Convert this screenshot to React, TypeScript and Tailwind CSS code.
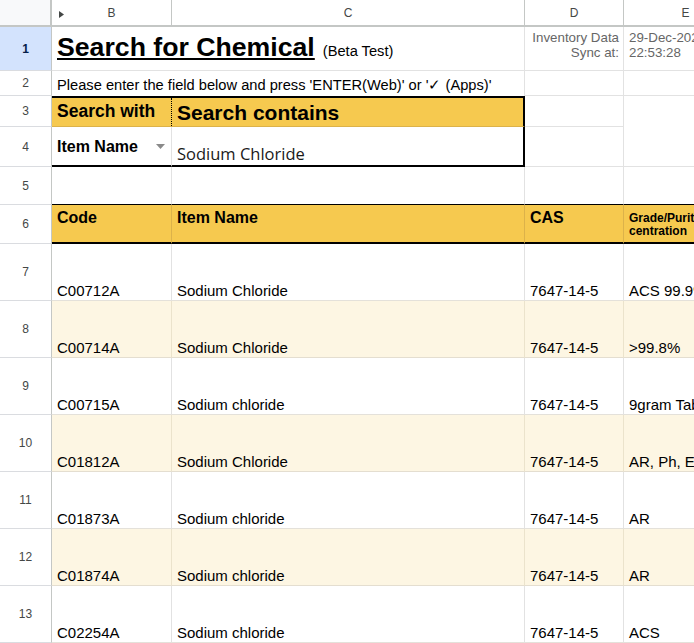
import React from "react";

type Row = { code: string; name: string; cas: string; grade: string };

const rows: Row[] = [
  { code: "C00712A", name: "Sodium Chloride", cas: "7647-14-5", grade: "ACS 99.9%" },
  { code: "C00714A", name: "Sodium Chloride", cas: "7647-14-5", grade: ">99.8%" },
  { code: "C00715A", name: "Sodium chloride", cas: "7647-14-5", grade: "9gram Tablets" },
  { code: "C01812A", name: "Sodium Chloride", cas: "7647-14-5", grade: "AR, Ph, Eur" },
  { code: "C01873A", name: "Sodium chloride", cas: "7647-14-5", grade: "AR" },
  { code: "C01874A", name: "Sodium chloride", cas: "7647-14-5", grade: "AR" },
  { code: "C02254A", name: "Sodium chloride", cas: "7647-14-5", grade: "ACS" },
];

function RowHead({ n, selected = false }: { n: number; selected?: boolean }) {
  return (
    <div
      className={
        selected
          ? "flex items-center justify-center border-r border-b border-r-[#c4c7c5] border-b-[#dadce0] bg-[#d3e3fd] text-[12px] font-bold text-[#041e49]"
          : "flex items-center justify-center border-r border-b border-r-[#c4c7c5] border-b-[#dadce0] bg-white text-[12px] text-[#444746]"
      }
    >
      {n}
    </div>
  );
}

function ColHead({ label }: { label: string }) {
  return (
    <div className="flex items-center justify-center border-r border-b-2 border-r-[#c4c7c5] border-b-[#c4c7c5] bg-white text-[12px] text-[#444746]">
      {label}
    </div>
  );
}

const plain = "border-r border-b border-r-[#e2e2e2] border-b-[#e2e2e2]";

export default function App() {
  return (
    <div className="h-[643px] w-[694px] overflow-hidden bg-white font-['Liberation_Sans',Arial,sans-serif] text-black">
      <div className="grid w-[748px] grid-cols-[52px_120px_353px_99px_124px] grid-rows-[27px_44px_25px_31px_40px_38px_39px_repeat(7,57px)]">
        {/* column headers */}
        <div className="border-r-2 border-b-2 border-r-[#c4c7c5] border-b-[#c4c7c5] bg-[#f8f9fa]" />
        <div className="relative flex items-center justify-center border-r border-b-2 border-r-[#c4c7c5] border-b-[#c4c7c5] bg-white text-[12px] text-[#444746]">
          <svg className="absolute left-[7px] top-[11px]" width="5" height="7" viewBox="0 0 5 7">
            <path d="M0 0 L5 3.5 L0 7 Z" fill="#444746" />
          </svg>
          B
        </div>
        <ColHead label="C" />
        <ColHead label="D" />
        <ColHead label="E" />

        {/* row 1 */}
        <RowHead n={1} selected />
        <div className={`col-span-2 overflow-hidden whitespace-nowrap pl-[5px] pt-[5px] leading-[31px] ${plain}`}>
          <span className="text-[26.67px] font-bold underline">Search for Chemical</span>
          <span className="ml-[8px] text-[14.67px]">(Beta Test)</span>
        </div>
        <div className={`pr-[4px] pt-[3px] text-right text-[13.33px] leading-[15px] text-[#666] ${plain}`}>
          Inventory Data
          <br />
          Sync at:
        </div>
        <div className={`overflow-hidden whitespace-nowrap pl-[5px] pt-[3px] text-[13.33px] leading-[15px] text-[#666] ${plain}`}>
          29-Dec-2023
          <br />
          22:53:28
        </div>

        {/* row 2 */}
        <RowHead n={2} />
        <div className="col-span-2 flex items-end overflow-hidden whitespace-nowrap border-r border-r-[#e2e2e2] pb-[2px] pl-[5px] text-[14.67px] leading-[17px]">
          Please enter the field below and press 'ENTER(Web)' or '✓ (Apps)'
        </div>
        <div className={plain} />
        <div className={plain} />

        {/* row 3 */}
        <RowHead n={3} />
        <div className="flex border-t-2 border-b border-t-black border-b-[#dcb24a] bg-[#f6c94f]">
          <div className="flex-1 whitespace-nowrap pl-[5px] pt-[3px] text-[17.5px] font-bold leading-[20px]">
            Search with
          </div>
          <div className="border-r border-dotted border-black" />
        </div>
        <div className="whitespace-nowrap border-t-2 border-r-2 border-b border-t-black border-r-black border-b-[#dcb24a] bg-[#f6c94f] pl-[5px] pt-[3px] text-[21px] font-bold leading-[24px]">
          Search contains
        </div>
        <div className={plain} />
        <div className={`row-span-2 ${plain}`} />

        {/* row 4 */}
        <RowHead n={4} />
        <div className="flex items-start justify-between border-r border-b-2 border-r-[#e2e2e2] border-b-black pl-[5px] pr-[6px] pt-[11px]">
          <span className="whitespace-nowrap text-[16px] font-bold leading-[18px]">Item Name</span>
          <svg className="mt-[6px]" width="9" height="5" viewBox="0 0 9 5">
            <path d="M0 0 L9 0 L4.5 5 Z" fill="#8a8a8a" />
          </svg>
        </div>
        <div className="flex items-end border-r-2 border-b-2 border-r-black border-b-black pb-[0px] pl-[5px] font-['Open_Sans',sans-serif] text-[16.5px] leading-[22px] text-[#1a1a1a]">
          Sodium Chloride
        </div>
        <div className={plain} />

        {/* row 5 */}
        <RowHead n={5} />
        <div className="border-r border-b border-r-[#e2e2e2] border-b-black" />
        <div className="border-r border-b border-r-[#e2e2e2] border-b-black" />
        <div className="border-r border-b border-r-[#e2e2e2] border-b-black" />
        <div className="border-r border-b border-r-[#e2e2e2] border-b-black" />

        {/* row 6: table header */}
        <RowHead n={6} />
        <div className="border-r border-b-2 border-r-[#dcb24a] border-b-black bg-[#f6c94f] pl-[5px] pt-[4px] text-[16px] font-bold leading-[18px]">
          Code
        </div>
        <div className="border-r border-b-2 border-r-[#dcb24a] border-b-black bg-[#f6c94f] pl-[5px] pt-[4px] text-[16px] font-bold leading-[18px]">
          Item Name
        </div>
        <div className="border-r border-b-2 border-r-[#dcb24a] border-b-black bg-[#f6c94f] pl-[5px] pt-[4px] text-[16px] font-bold leading-[18px]">
          CAS
        </div>
        <div className="overflow-hidden whitespace-nowrap border-r border-b-2 border-r-[#dcb24a] border-b-black bg-[#f6c94f] pl-[5px] pt-[7px] text-[12px] font-bold leading-[13px]">
          Grade/Purity/Con
          <br />
          centration
        </div>

        {/* data rows */}
        {rows.map((r, i) => {
          const cell =
            i % 2 === 1
              ? "flex items-end overflow-hidden whitespace-nowrap border-r border-b border-r-[#ebe3cc] border-b-[#e4ded0] bg-[#fdf6e3] pb-[1px] pl-[5px] text-[15px] leading-[17px]"
              : "flex items-end overflow-hidden whitespace-nowrap border-r border-b border-r-[#e2e2e2] border-b-[#e4e1da] bg-white pb-[1px] pl-[5px] text-[15px] leading-[17px]";
          return (
            <React.Fragment key={r.code}>
              <RowHead n={7 + i} />
              <div className={cell}>{r.code}</div>
              <div className={cell}>{r.name}</div>
              <div className={cell}>{r.cas}</div>
              <div className={cell}>{r.grade}</div>
            </React.Fragment>
          );
        })}
      </div>
    </div>
  );
}
